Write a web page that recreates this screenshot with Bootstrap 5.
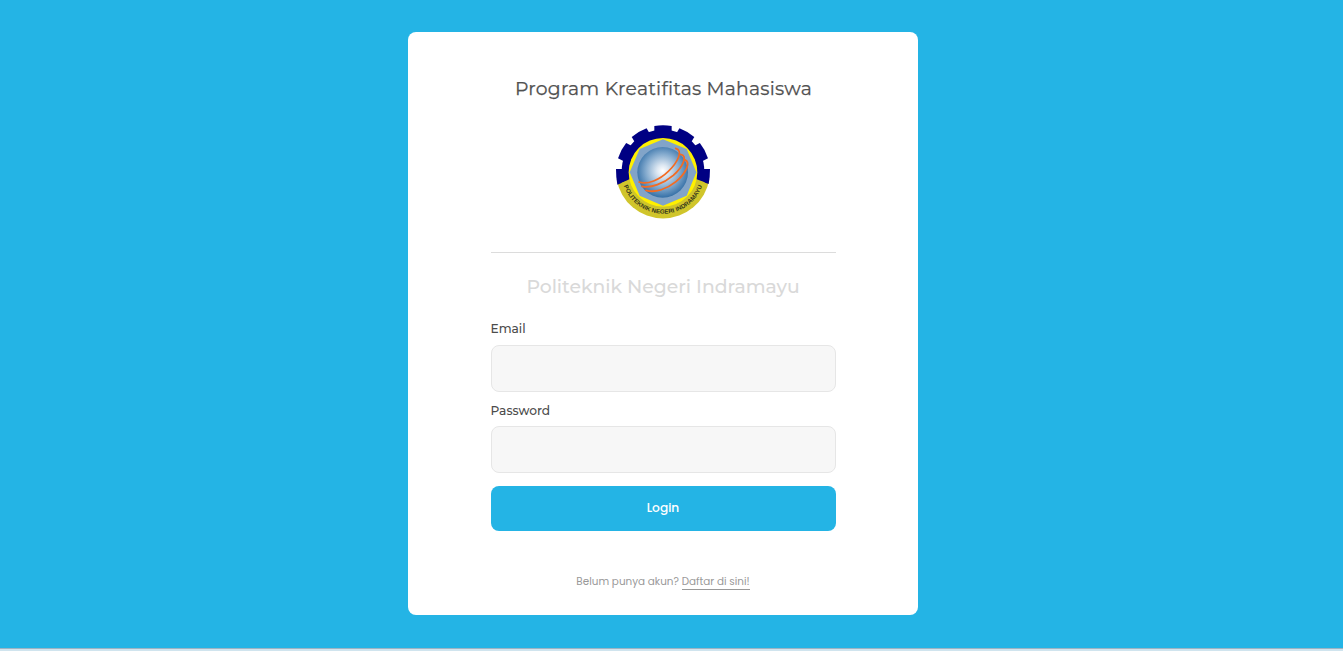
<!DOCTYPE html>
<html lang="id">
<head>
<meta charset="utf-8">
<meta name="viewport" content="width=device-width, initial-scale=1">
<title>Program Kreatifitas Mahasiswa</title>
<link href="https://cdn.jsdelivr.net/npm/bootstrap@5.3.0/dist/css/bootstrap.min.css" rel="stylesheet">
<style>
body{background:#24b4e5;font-family:Montserrat,Inter,sans-serif;color:#555;height:651px;overflow:hidden}
.page{height:648px;padding-top:32px}
.login-card{width:510px;height:583px;margin-left:408px;padding:0 82px 0 83px;border:0;border-radius:8px}
.title{font-size:18.8px;line-height:24px;margin-top:45px;font-weight:400;letter-spacing:.25px;color:#505050;-webkit-text-stroke:.25px #505050}
.logo{margin:17px 0 0 117px}
.rule{margin:26px 0 0;border-top:1px solid #dcdcdc;opacity:1}
.school{font-size:18.8px;line-height:24px;margin-top:22px;padding-right:1px;font-weight:500;color:#d9d9d9}
.field-label{font-size:12.2px;line-height:18px;font-weight:500;color:#4c4c4c;margin:21px 0 7px -.5px}
.field-box + .field-label{margin-top:10px;margin-bottom:6px}
.field-box,.field-box:focus{height:47px;background:#f7f7f7;border:1px solid #e6e6e6;border-radius:8px}
.login-btn,.login-btn:hover{height:45px;margin-top:13px;background:#24b4e5;color:#fff;border:0;border-radius:8px;font:500 12.2px/43px Poppins,Inter,sans-serif;padding:0 1px 2px 0}
.signup{margin-top:42px;padding-right:1px;font:400 10.4px/17px Poppins,Inter,sans-serif;color:#999}
.signup a{color:#999;text-decoration:none;border-bottom:1px solid #999;display:inline-block;line-height:14px}
.footer-strip{height:3px;background:#d0e4ee;border-top:1px solid #9cb4c4}
</style>
</head>
<body>
<main class="page">
<div class="card login-card">
  <h1 class="title mb-0 text-center text-nowrap">Program Kreatifitas Mahasiswa</h1>
  <div class="logo">
  <svg class="d-block" width="110" height="108" viewBox="0 0 330 324" role="img" aria-label="Politeknik Negeri Indramayu">
    <defs>
      <radialGradient id="globe" cx=".5" cy=".47" r=".52"><stop offset="0" stop-color="#fff"/><stop offset=".22" stop-color="#dce7f2"/><stop offset=".65" stop-color="#82a9cd"/><stop offset="1" stop-color="#3973a9"/></radialGradient>
      <path id="band" d="M41 163A124 124 0 0 0 289 163"/>
      <path id="tooth" d="M139 60L139 24Q165 19 191 24L191 60Z"/>
    </defs>
    <path d="M26 184A141 141 0 0 0 304 184Z" fill="#d0c52b"/>
    <g fill="#000083">
      <path d="M45 190A124 124 0 1 1 285 190Z"/>
      <use href="#tooth"/><use href="#tooth" transform="rotate(31 165 163)"/><use href="#tooth" transform="rotate(62 165 163)"/><use href="#tooth" transform="rotate(-31 165 163)"/><use href="#tooth" transform="rotate(-62 165 163)"/>
      <path d="M24 153H62V186L28 200Q24 180 24 153M306 153H268V186L302 198Q306 180 306 153"/>
    </g>
    <path d="M40 195L64 184H266L290 193L284 206H48Z" fill="#d0c52b"/>
    <circle cx="165" cy="163" r="103" fill="#fff000"/>
    <path d="M165 64L236 93L265 163L236 233L165 263L95 233L65 163L95 93Z" fill="#82a4c8"/>
    <circle cx="164" cy="163" r="76" fill="url(#globe)"/>
    <g fill="none" stroke="#f36b23" stroke-linecap="round">
      <path d="M203 91C227 97 209 133 181 160C155 185 119 201 93 192" stroke-width="5"/>
      <path d="M217 109C241 112 225 146 196 172C167 196 129 212 102 205" stroke-width="5.5"/>
      <path d="M230 125C250 131 235 165 204 191C178 212 142 226 114 217" stroke-width="5.5"/>
    </g>
    <text font-family="Liberation Sans" font-size="18" font-weight="700" fill="#34351c"><textPath href="#band" startOffset="41" textLength="307" lengthAdjust="spacingAndGlyphs">POLITEKNIK NEGERI INDRAMAYU</textPath></text>
  </svg></div>
  <hr class="rule">
  <h2 class="school mb-0 text-center text-nowrap">Politeknik Negeri Indramayu</h2>
  <form class="d-flex flex-column">
    <label class="field-label" for="email">Email</label>
    <input class="form-control field-box" id="email" type="email">
    <label class="field-label" for="password">Password</label>
    <input class="form-control field-box" id="password" type="password">
    <button class="btn login-btn w-100" type="button">Login</button>
  </form>
  <p class="signup mb-0 text-center text-nowrap">Belum punya akun? <a href="#">Daftar di sini!</a></p>
</div>
</main>
<div class="footer-strip"></div>
<script src="https://cdn.jsdelivr.net/npm/bootstrap@5.3.0/dist/js/bootstrap.bundle.min.js"></script>
</body>
</html>
